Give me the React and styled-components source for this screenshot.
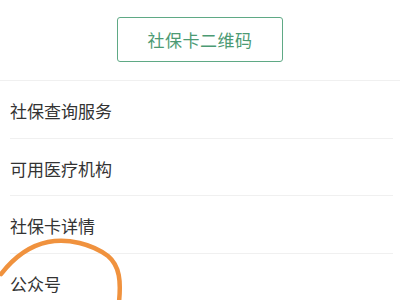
import React from "react";
import styled, { createGlobalStyle } from "styled-components";

const Global = createGlobalStyle`
  html, body { margin: 0; padding: 0; background: #ffffff; }
  body { font-family: "Noto Sans CJK SC", "Noto Sans", sans-serif; }
`;

const Page = styled.div`
  position: relative;
  width: 400px;
  height: 300px;
  overflow: hidden;
  background: #fff;
`;

const Header = styled.div`
  height: 81px;
  display: flex;
  justify-content: center;
  align-items: flex-start;
  padding-top: 17px;
  box-sizing: border-box;
  border-bottom: 1px solid #f0f0f0;
`;

const QrButton = styled.button`
  width: 166px;
  height: 45px;
  border: 1.5px solid #5fa985;
  border-radius: 3px;
  background: #fff;
  color: #4c9a73;
  font-family: "Noto Sans CJK SC", sans-serif;
  font-size: 17px;
  letter-spacing: 0.5px;
  display: flex;
  align-items: center;
  justify-content: center;
  padding: 0;
`;

const List = styled.div`
  display: flex;
  flex-direction: column;
`;

const Row = styled.div`
  height: 57.5px;
  margin: 0 7px 0 10px;
  display: flex;
  align-items: center;
  padding-top: 3px;
  box-sizing: border-box;
  border-bottom: ${(p) => (p.$last ? "none" : "1.5px solid #f0f0f0")};
  color: #333;
  font-size: 17px;
`;

const Annotation = styled.svg`
  position: absolute;
  left: 0;
  top: 230px;
  pointer-events: none;
`;

export default function App() {
  const items = ["社保查询服务", "可用医疗机构", "社保卡详情", "公众号"];
  return (
    <>
      <Global />
      <Page>
        <Header>
          <QrButton>社保卡二维码</QrButton>
        </Header>
        <List>
          {items.map((t, i) => (
            <Row key={t} $last={i === items.length - 1}>
              {t}
            </Row>
          ))}
        </List>
        <Annotation width="140" height="70" viewBox="0 0 140 70">
          <path
            d="M1 44 C 12 30, 28 16, 48 12 C 68 8, 92 14, 108 26 C 120 36, 121 52, 119 72"
            fill="none"
            stroke="#f0923e"
            strokeWidth="4.5"
            strokeLinecap="round"
          />
        </Annotation>
      </Page>
    </>
  );
}
